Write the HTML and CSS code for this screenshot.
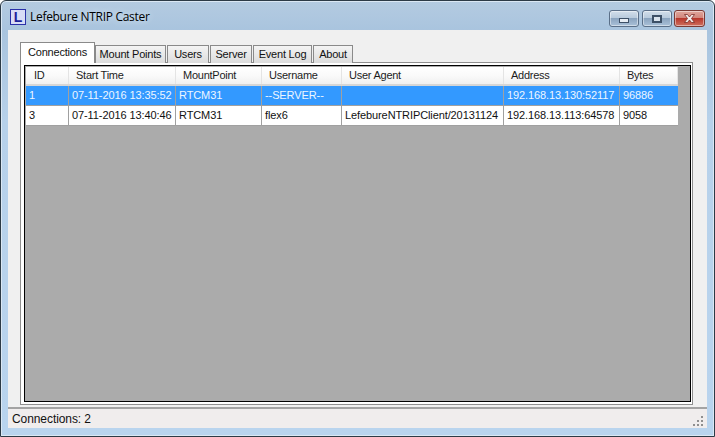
FILE: index.html
```html
<!DOCTYPE html>
<html lang="en">
<head>
<meta charset="utf-8">
<title>Lefebure NTRIP Caster</title>
<link rel="stylesheet" href="styles.css">
</head>
<body>
<div class="window">
  <header class="titlebar">
    <div class="app-icon">L</div>
    <div class="title">Lefebure NTRIP Caster</div>
    <div class="controls">
      <div class="ctl"><span class="glyph-min"></span></div>
      <div class="ctl"><span class="glyph-max"></span></div>
      <div class="ctl close">
        <svg width="15" height="11" viewBox="0 0 15 11"><path d="M2.500 1.500h3L7.500 4l2-2.500h3L9.500 5.500l3 4h-3l-2-2.500-2 2.500h-3l3-4z" fill="#f4ecec" stroke="#7a2e28" stroke-width=".8"/></svg>
      </div>
    </div>
  </header>
  <main class="client">
    <div class="tabs">
      <div class="tab active">Connections</div>
      <div class="tab w-mount">Mount Points</div>
      <div class="tab w-users">Users</div>
      <div class="tab w-server">Server</div>
      <div class="tab w-log">Event Log</div>
      <div class="tab w-about">About</div>
    </div>
    <div class="page">
      <div class="grid">
        <div class="row head">
          <div class="c c1">ID</div><div class="c c2">Start Time</div><div class="c c3">MountPoint</div><div class="c c4">Username</div><div class="c c5">User Agent</div><div class="c c6">Address</div><div class="c c7">Bytes</div>
        </div>
        <div class="row sel">
          <div class="c c1">1</div><div class="c c2">07-11-2016 13:35:52</div><div class="c c3">RTCM31</div><div class="c c4">--SERVER--</div><div class="c c5"></div><div class="c c6">192.168.13.130:52117</div><div class="c c7">96886</div>
        </div>
        <div class="row">
          <div class="c c1">3</div><div class="c c2">07-11-2016 13:40:46</div><div class="c c3">RTCM31</div><div class="c c4">flex6</div><div class="c c5">LefebureNTRIPClient/20131124</div><div class="c c6">192.168.13.113:64578</div><div class="c c7">9058</div>
        </div>
      </div>
    </div>
  </main>
  <footer class="status">
    <span>Connections: 2</span>
    <svg class="grip" width="11" height="11" viewBox="0 0 11 11" fill="#8f8f8f"><rect x="8" y="0" width="2" height="2"/><rect x="4" y="4" width="2" height="2"/><rect x="8" y="4" width="2" height="2"/><rect x="0" y="8" width="2" height="2"/><rect x="4" y="8" width="2" height="2"/><rect x="8" y="8" width="2" height="2"/></svg>
  </footer>
</div>
</body>
</html>
```
FILE: styles.css
```css
* { box-sizing: border-box; }
html, body { margin: 0; height: 100%; overflow: hidden; background: #fff; }
body { font: 11px "Liberation Sans", Arial, sans-serif; color: #000; }

.window {
  width: 715px; height: 437px;
  display: flex; flex-direction: column;
  border: 1px solid #2c3a46;
  border-radius: 6px 6px 0 0;
  padding: 0 7px 7px;
  background: linear-gradient(180deg, #b4cbe1 0, #a9c4de 30px, #b7d1ea 120px, #b9d4ee 100%);
  box-shadow: inset 0 0 0 1px #dbe8f4;
}

.titlebar { height: 29px; display: flex; align-items: center; flex: none; }
.app-icon {
  width: 16px; height: 16px; margin: 2px 0 0 2px;
  border: 1px solid #2a2fa8; background: #d8dcf6;
  color: #1c1f9a; font-size: 14px; font-weight: bold; line-height: 14px; text-align: center;
}
.title { margin: 2px 0 0 4px; font: 12px "Open Sans", sans-serif; letter-spacing: -.3px; color: #000; text-shadow: 0 0 6px #e4eef8; }
.controls { margin-left: auto; display: flex; gap: 3px; align-self: flex-start; margin-top: 9px; margin-right: 2px; }
.ctl {
  width: 30px; height: 17px;
  border: 1px solid #5a6f88; border-radius: 3px;
  background: linear-gradient(180deg, #d2deea 0, #b9cbdd 45%, #8ba4bf 50%, #a9c0d8 100%);
  box-shadow: inset 0 0 0 1px rgba(255,255,255,.45);
  display: flex; align-items: center; justify-content: center;
}
.close { width: 31px; margin-left: -1px; border-color: #7a3a34; background: linear-gradient(180deg, #e0a69c 0, #d2877c 45%, #b8382c 50%, #cf6f5f 100%); }
.glyph-min { width: 10px; height: 5px; margin-top: 4px; background: #e6ecf3; border: 1px solid #3c4f66; }
.glyph-max { width: 10px; height: 8px; background: #d8e2ec; border: 2px solid #3c4f66; }

.client { flex: 1; min-height: 0; background: #f0f0f0; padding: 12px 12px 0 12px; display: flex; flex-direction: column; }

.tabs { display: flex; height: 20px; position: relative; z-index: 1; flex: none; }
.tab {
  height: 18px; margin-top: 3px; padding-top: 1px;
  border: 1px solid #8a8a8a; border-bottom: 0;
  background: linear-gradient(180deg, #f4f4f4, #dcdcdc);
  text-align: center; line-height: 15px; letter-spacing: -.2px; color: #111;
  margin-right: 1px;
}
.tab.active {
  width: 75px; height: 21px; margin-top: 0; padding-top: 2px; margin-right: 0;
  background: #fff;
}
.w-mount { width: 71px; }
.w-users { width: 42px; }
.w-server { width: 42px; }
.w-log { width: 59px; }
.w-about { width: 40px; margin-right: 0; }

.page {
  height: 343px; width: 673px; flex: none;
  border: 1px solid #8f8f8f;
  background: #fff; padding: 2px 1px 2px 3px;
}
.grid {
  height: 337px; width: 667px;
  border: 1px solid #000;
  background: #ababab; padding: 1px 0 0 1px;
}
.row { display: flex; height: 20px; width: 652px; background: #fff; border-bottom: 1px solid #a0a0a0; letter-spacing: -.1px; color: #111; }
.row.head {
  height: 19px;
  background: linear-gradient(180deg, #fff 0, #fafafa 50%, #f0f0f0 100%);
  border-bottom: 2px solid #d6d6d6;
  color: #1c1c1c; letter-spacing: -.25px;
}
.row.sel { background: #3399ff; color: #eef6ff; }
.c {
  padding-left: 3px; line-height: 19px; white-space: nowrap; overflow: hidden;
  border-right: 1px solid #a0a0a0;
  flex: none;
}
.head .c { padding-left: 7px; border-right: 1px solid #e4e4e4; line-height: 17px; }
.head .c1 { padding-left: 8px; }
.c1 { width: 43px; }
.c2 { width: 107px; }
.c3 { width: 86px; }
.c4 { width: 80px; }
.c5 { width: 162px; }
.c6 { width: 116px; }
.c7 { width: 58px; border-right: 0; }

.status {
  flex: none; height: 21px;
  border-top: 2px solid #a3a3a3; background: #f0eded;
  display: flex; align-items: center; justify-content: space-between;
  padding: 0 3px 0 4px; font-size: 12px; letter-spacing: -.08px; color: #111;
  margin-bottom: 1px;
}
.grip { align-self: flex-end; margin-bottom: 1px; }
```
